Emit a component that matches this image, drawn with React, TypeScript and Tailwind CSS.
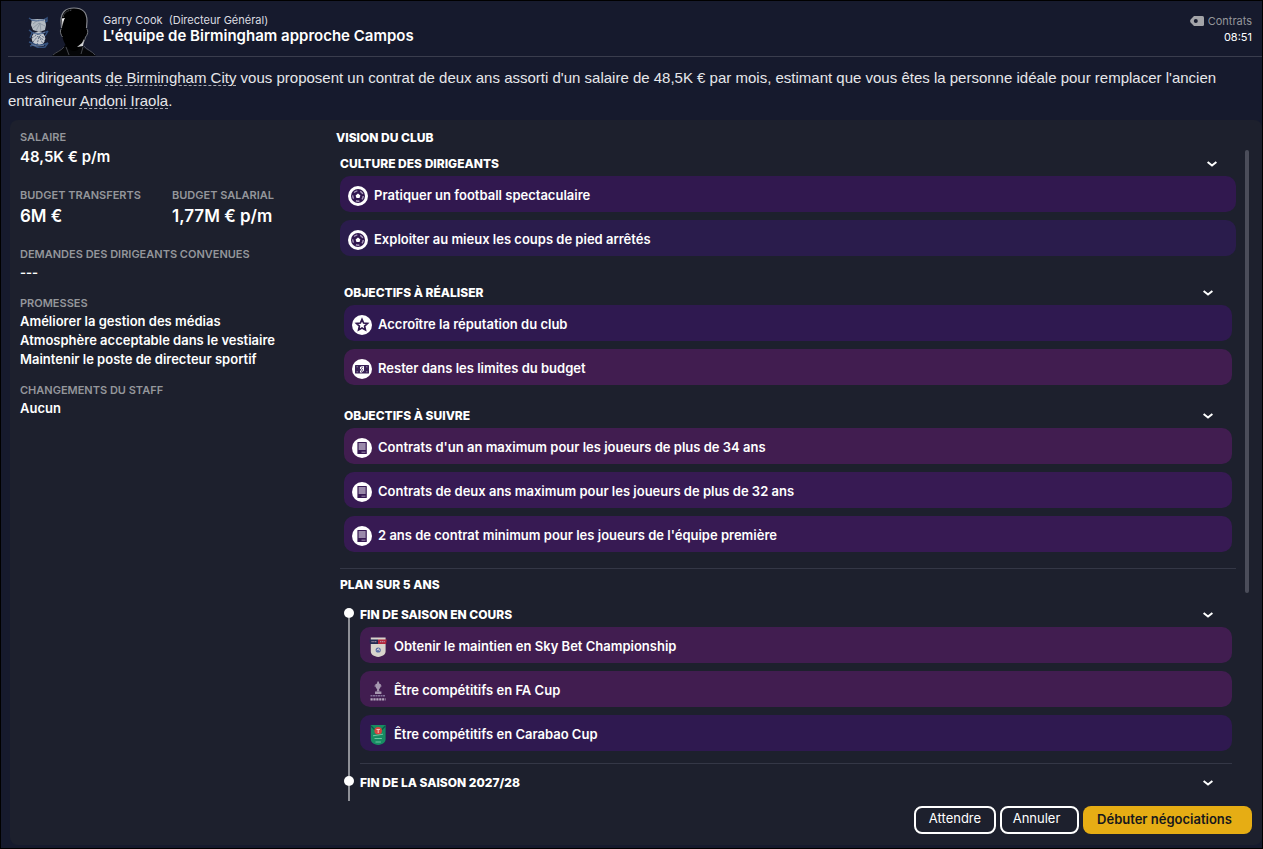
import React, { useState } from 'react';
import clsx from 'clsx';

type IconName = 'ball' | 'star' | 'money' | 'tablet' | 'efl' | 'facup' | 'carabao';

type Goal = { label: string; icon: IconName; color: string };

const culture: Goal[] = [
  { label: 'Pratiquer un football spectaculaire', icon: 'ball', color: 'bg-[#31184f]' },
  { label: 'Exploiter au mieux les coups de pied arrêtés', icon: 'ball', color: 'bg-[#2a1c4c]' },
];

const toAchieve: Goal[] = [
  { label: 'Accroître la réputation du club', icon: 'star', color: 'bg-[#2f1950]' },
  { label: 'Rester dans les limites du budget', icon: 'money', color: 'bg-[#411d50]' },
];

const toFollow: Goal[] = [
  { label: "Contrats d'un an maximum pour les joueurs de plus de 34 ans", icon: 'tablet', color: 'bg-[#411d50]' },
  { label: 'Contrats de deux ans maximum pour les joueurs de plus de 32 ans', icon: 'tablet', color: 'bg-[#371a53]' },
  { label: "2 ans de contrat minimum pour les joueurs de l'équipe première", icon: 'tablet', color: 'bg-[#371a53]' },
];

const currentSeason: Goal[] = [
  { label: 'Obtenir le maintien en Sky Bet Championship', icon: 'efl', color: 'bg-[#411d50]' },
  { label: 'Être compétitifs en FA Cup', icon: 'facup', color: 'bg-[#411d50]' },
  { label: 'Être compétitifs en Carabao Cup', icon: 'carabao', color: 'bg-[#2f1950]' },
];

const promises = [
  'Améliorer la gestion des médias',
  'Atmosphère acceptable dans le vestiaire',
  'Maintenir le poste de directeur sportif',
];

const GoalIcon = ({ name }: { name: IconName }) => (
  <svg viewBox="0 0 20 20" className="h-5 w-5 shrink-0" aria-hidden="true">
    {name === 'ball' && (
      <>
        <circle cx="10" cy="10" r="10" fill="#fff" />
        <circle cx="10" cy="10" r="7" fill="#31184f" />
        <circle cx="10" cy="10" r="5.2" fill="none" stroke="#a99abb" strokeWidth="1.4" strokeDasharray="3.6 2.93" />
        <path d="M10 7.600l2.400 1.800-.9 2.700h-3l-.9-2.700z" fill="#fff" />
      </>
    )}
    {name === 'star' && (
      <>
        <circle cx="10" cy="10" r="10" fill="#fff" />
        <path
          d="M10 4.4l1.6 3.6 3.9.4-2.9 2.6.8 3.9-3.4-2-3.4 2 .8-3.9-2.9-2.6 3.9-.4z"
          fill="none"
          stroke="#31184f"
          strokeWidth="1.7"
        />
      </>
    )}
    {name === 'money' && (
      <>
        <circle cx="10" cy="10" r="10" fill="#fff" />
        <rect x="3" y="6" width="14" height="8.5" rx="0.6" fill="#3a2257" />
        <path d="M8 8l2.200-1h1.800v4.500L9.800 13.500H8v-1.500l1.500-1.500L8 10z" fill="#fff" />
        <path d="M10.800 7.500L9.500 9.500l1 1-1 2.500" fill="none" stroke="#3a2257" strokeWidth=".8" />
        <path d="M4.500 7.800h1.500M4.500 12.800h1.500M14 7.800h1.500M14 12.800h1.500" stroke="#8f80a0" strokeWidth="1" />
      </>
    )}
    {name === 'tablet' && (
      <>
        <circle cx="10" cy="10" r="10" fill="#fff" />
        <rect x="5.4" y="4" width="9.4" height="12" rx="0.6" fill="#371a53" />
        <rect x="6.6" y="5" width="7" height="7" fill="#9a8aaa" />
        <path d="M9.5 14.2h4" stroke="#9a8aaa" strokeWidth="1" />
      </>
    )}
    {name === 'efl' && (
      <>
        <path d="M2.800 0.500h14.800v14c0 3-3.200 5-7.400 5.500-4.200-.5-7.400-2.500-7.400-5.500z" fill="#d8d4cc" />
        <path d="M1.500 2.500h8.500v4.500H2z" fill="#232a52" />
        <path d="M10 2.500h8.800L18 7h-8z" fill="#b3273d" />
        <path d="M3.500 4.700h5.500M12 4.700h5" stroke="#b9a3b4" strokeWidth="1" strokeDasharray="1.200 .6" />
        <circle cx="10.200" cy="13" r="2.600" fill="#5d70a8" />
        <path d="M8.800 13.200l1.800-1.400.8 2" fill="none" stroke="#e5e2de" />
      </>
    )}
    {name === 'facup' && (
      <g fill="#a698b0">
        <path d="M9.400 0.500h1.400l.4 2 1.800 1-.6 3-1.400 2 .6 2h-3l.6-2-1.400-2-.6-3 1.800-1z" />
        <path d="M6.500 4.500h7v1h-7zM7 10.500h6.400v2.500H7z" />
        <path d="M2.500 14.800h15" stroke="#85739a" strokeWidth="1.600" strokeDasharray="2 .5" />
        <path d="M2.500 18.300h15" stroke="#b3a7bd" strokeWidth="2.200" strokeDasharray="2.200 .7" />
      </g>
    )}
    {name === 'carabao' && (
      <>
        <path d="M2.800 0h14.800v14c0 3.200-2.600 5.400-7.400 6-4.800-.6-7.400-2.800-7.400-6z" fill="#178c62" />
        <path d="M3 1l4 4M17.400 1l-4 4" stroke="#0b5a48" strokeWidth="1.400" />
        <circle cx="10.200" cy="5.800" r="3.800" fill="#d8443f" />
        <path d="M8.500 4.500h3.400M10.200 4.500v3.500" stroke="#f2c9c2" strokeWidth="1" />
        <path d="M5 10.800l10-1.600M6.500 13.500h7.400M7.500 17h5.400" stroke="#6fc3a2" strokeWidth="1" />
      </>
    )}
  </svg>
);

const Chevron = ({ closed = false }: { closed?: boolean }) => (
  <svg viewBox="0 0 10 6" className={clsx('h-1.5 w-2.5', closed && '-rotate-90')} aria-hidden="true">
    <path d="M.6 1l4.400 3.500L9.400 1" fill="none" stroke="#fff" strokeWidth="2" />
  </svg>
);

const ClubCrest = () => (
  <svg viewBox="0 0 22 32" className="h-8 w-[22px]" aria-hidden="true">
    <path d="M4 3h13l1 6-1 5-6 2-6-2-2-5z" fill="#b3bac2" />
    <path d="M5 8l5-4 6 1M5 12l6-5 6 3M8 15l4-8 1 9" fill="none" stroke="#8994a1" strokeWidth=".8" />
    <circle cx="10.500" cy="22.500" r="6.800" fill="#c4c9d0" />
    <path d="M4 22l6-4 7 4M5 26l5-6 7 5M9 29l2-9 4 8" fill="none" stroke="#56647c" strokeWidth=".9" strokeDasharray="2 1" />
    <path d="M1 2l3 2c5 1 11 1 15-2v3l-2 1M1 14l4 3c4 1 10 1 15-2l-3 5M4 17l-2 5M1 26l3 1c5 3 10 3 16 0l-3 4-6 1-6-3-3 1" fill="none" stroke="#35527f" strokeWidth="1.400" />
    <path d="M3 3.500c5 1.500 10 1.500 14 0M5 17c4 1 9 1 12-1M3 28c5 2.500 9 2.500 13 1" fill="none" stroke="#8b9bb3" strokeWidth=".7" />
  </svg>
);

const Silhouette = () => (
  <svg viewBox="0 0 44 49" className="h-[49px] w-11" aria-hidden="true">
    <path d="M0 49c3-4 8-5 11-8l3-4-1-6h17l-1 6 3 4c4 3 9 4 12 8z" fill="#050608" />
    <path d="M22 1c9 0 13 5 13 13l-.5 8c2 0 1.500 6-1 8-1 6-6 14-11.500 14S11.500 36 10.500 30C8 28 7.500 22 9.500 22L9 14C9 6 13 1 22 1z" fill="#000" />
    <path d="M9.500 21L9 14C9 6 13 1 22 1s13 5 13 13l-.5 7" fill="none" stroke="#85878d" strokeWidth="1.200" />
    <path d="M10.500 20l-.5-8.500 3-.5c-1.500 2-2 5-2.500 9z" fill="#fff" />
    <path d="M11 10c1-4 4-6.500 9-7" fill="none" stroke="#55585e" strokeWidth="1" strokeDasharray="1.500 1" />
    <path d="M34.500 22c2 0 1.500 6-1 8-.5 3-2 6-4 8.500M9.500 22c-2 0-1 6 1 8" fill="none" stroke="#777a80" />
    <path d="M32 32l-2 4-5 4 6-1 1-6z" fill="#d2d3d5" />
    <path d="M1 48c3-3 8-4 11-8M32 39c3 4 8 5 11 9M14 40l3 8M31 40l-2 7" fill="none" stroke="#56585e" strokeWidth=".8" />
  </svg>
);

const TagIcon = () => (
  <svg viewBox="0 0 14 10" className="h-2.5 w-3.5" aria-hidden="true">
    <path d="M4 0h8.500Q14 0 14 1.500v7Q14 10 12.500 10H4L.6 6.600Q-.4 5 .6 3.400z" fill="#a3a4a8" />
    <circle cx="5.800" cy="5" r="2" fill="#161a2d" />
  </svg>
);

const GoalCard = ({ goal }: { goal: Goal }) => (
  <li className={clsx('flex h-9 items-center gap-1.5 rounded-[10px] px-2 pt-1', goal.color)}>
    <GoalIcon name={goal.icon} />
    <span className="pb-0.5 text-[13px] leading-5 font-semibold">{goal.label}</span>
  </li>
);

const Section = ({ title, goals = [] }: { title: string; goals?: Goal[] }) => {
  const [open, setOpen] = useState(true);

  return (
    <section>
      <h3>
        <button
          type="button"
          onClick={() => setOpen(!open)}
          aria-expanded={open}
          className="flex h-[26px] w-full items-center justify-between pt-0.5 pr-[19px] text-left text-[12px] font-extrabold uppercase"
        >
          {title}
          <Chevron closed={!open} />
        </button>
      </h3>
      {open && goals.length > 0 && (
        <ul className="flex flex-col gap-2">
          {goals.map((goal) => <GoalCard key={goal.label} goal={goal} />)}
        </ul>
      )}
    </section>
  );
};

const TimelineItem = ({ first = false, children }: { first?: boolean; children: React.ReactNode }) => (
  <div className="flex gap-1.5">
    <div className="flex w-2.5 shrink-0 flex-col items-center">
      <div className={clsx('h-[7px] w-0.5', !first && 'bg-[#8e9097]')} />
      <div className="h-2.5 w-2.5 rounded-full bg-white" />
      <div className="w-0.5 flex-1 bg-[#8e9097]" />
    </div>
    <div className="min-w-0 flex-1">{children}</div>
  </div>
);

const Label = ({ children }: { children: React.ReactNode }) => (
  <dt className="text-[11px] leading-[18px] font-semibold text-[#94969b] uppercase">{children}</dt>
);

const NameLink = ({ href, children }: { href: string; children: React.ReactNode }) => (
  <a href={href} className="underline decoration-[#a9abb3] decoration-dashed decoration-1 underline-offset-2">
    {children}
  </a>
);

const App = () => {
  return (
    <div className="flex min-h-screen flex-col border border-black bg-[#161a2d] font-['Inter','Liberation_Sans',sans-serif] text-white">
      <header className="ml-[7px] flex h-14 items-end justify-between border-b border-[#3a3d4d] pr-2.5">
        <div className="flex items-end">
          <div className="pr-0.5 pb-2 pl-5"><ClubCrest /></div>
          <Silhouette />
          <div className="pb-3 pl-[7px]">
            <p className="text-[11px] leading-4 text-[#dcdde1]">Garry Cook&nbsp; (Directeur Général)</p>
            <h1 className="text-[15px] leading-4 font-semibold">L'équipe de Birmingham approche Campos</h1>
          </div>
        </div>
        <div className="pb-[11px] text-right text-[11px] leading-4">
          <p className="flex items-center gap-1 text-[#94969b]"><TagIcon /> Contrats</p>
          <p>08:51</p>
        </div>
      </header>

      <p className="px-[7px] pt-[9px] pb-2 font-['Liberation_Sans',sans-serif] text-[15px] leading-[23px] text-[#e6e7ea]">
        Les dirigeants <NameLink href="#club">de Birmingham City</NameLink> vous proposent un contrat de deux ans
        assorti d'un salaire de 48,5K € par mois, estimant que vous êtes la personne idéale pour remplacer l'ancien
        entraîneur <NameLink href="#iraola">Andoni Iraola</NameLink>.
      </p>

      <main className="mb-[3px] ml-[9px] flex flex-1 flex-col rounded-lg bg-[#1d202d] pr-2.5 pb-[11px] pl-2.5">
        <div className="flex flex-1 pt-2">
          <dl className="w-[316px] shrink-0 text-[13px] leading-[19px] font-semibold">
            <div className="mb-[18px]">
              <Label>Salaire</Label>
              <dd className="text-[15px] leading-[22px]">48,5K € p/m</dd>
            </div>
            <div className="mb-[17px] flex">
              <div className="w-[152px]">
                <Label>Budget transferts</Label>
                <dd className="text-[17px] leading-6">6M €</dd>
              </div>
              <div>
                <Label>Budget salarial</Label>
                <dd className="text-[17px] leading-6">1,77M € p/m</dd>
              </div>
            </div>
            <div className="mb-3">
              <Label>Demandes des dirigeants convenues</Label>
              <dd>---</dd>
            </div>
            <div className="mb-3">
              <Label>Promesses</Label>
              {promises.map((promise) => <dd key={promise}>{promise}</dd>)}
            </div>
            <div>
              <Label>Changements du staff</Label>
              <dd>Aucun</dd>
            </div>
          </dl>

          <div className="flex min-w-0 flex-1 flex-col">
            <h2 className="h-[22px] text-[12px] leading-5 font-extrabold uppercase">Vision du club</h2>
            <div className="flex flex-1">
              <div className="min-w-0 flex-1 pl-1">
                <Section title="Culture des dirigeants" goals={culture} />
                <div className="flex flex-col gap-[17px] px-1 pt-[23px] pb-4">
                  <Section title="Objectifs à réaliser" goals={toAchieve} />
                  <Section title="Objectifs à suivre" goals={toFollow} />
                </div>

                <h2 className="border-t border-[#343746] text-[12px] leading-8 font-extrabold uppercase">Plan sur 5 ans</h2>
                <div className="px-1">
                  <TimelineItem first>
                    <Section title="Fin de saison en cours" goals={currentSeason} />
                    <div className="mt-3 mb-[5px] border-b border-[#343746]" />
                  </TimelineItem>
                  <TimelineItem>
                    <div className="pb-1.5">
                      <Section title="Fin de la saison 2027/28" />
                    </div>
                  </TimelineItem>
                </div>
              </div>

              {/* Scroll bar */}
              <div className="mr-[3px] ml-[9px] w-1">
                <div className="h-[68%] rounded-full bg-[#4b4d5a]" />
              </div>
            </div>
          </div>
        </div>

        <div className="flex justify-end gap-1 pt-1 text-[13px] leading-5">
          <button type="button" className="h-7 w-[82px] rounded-lg border-2 border-white pb-1">Attendre</button>
          <button type="button" className="h-7 w-[79px] rounded-lg border-2 border-white pr-1.5 pb-1">Annuler</button>
          <button type="button" className="h-7 w-[169px] rounded-lg bg-[#e6ad14] pr-1.5 pb-0.5 font-semibold text-[#16171c]">
            Débuter négociations
          </button>
        </div>
      </main>
    </div>
  );
};

export default App;
